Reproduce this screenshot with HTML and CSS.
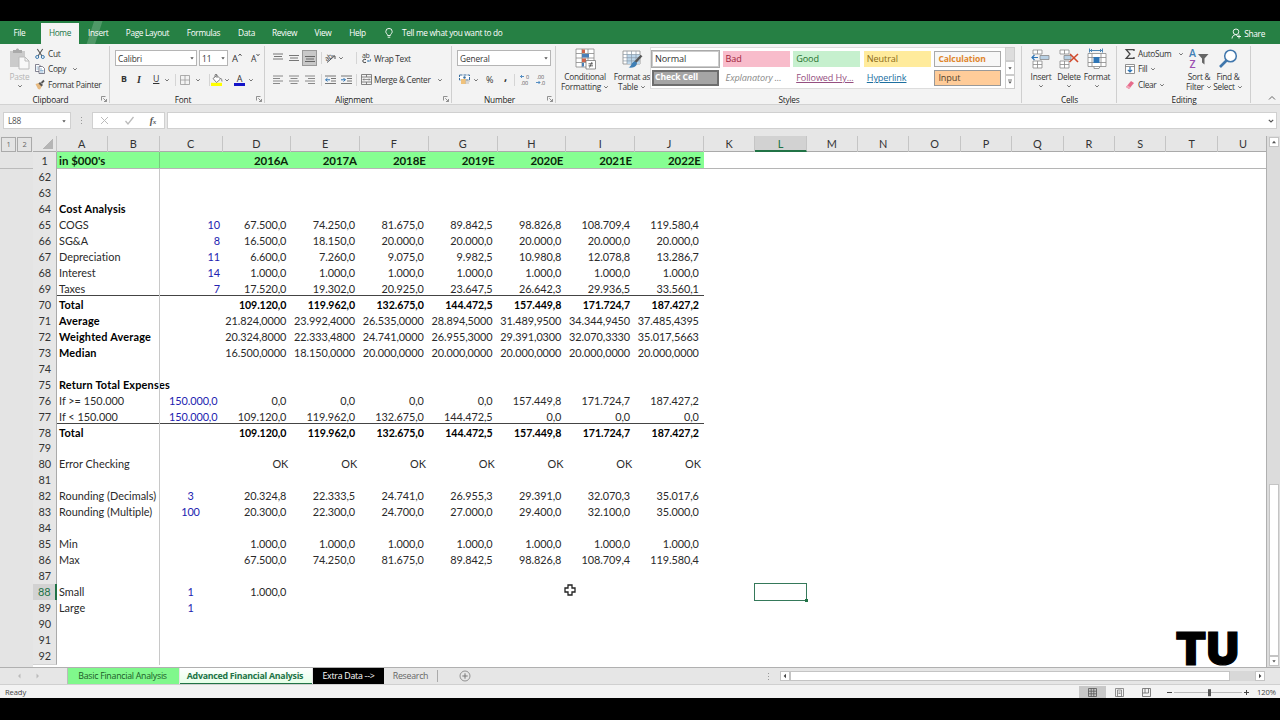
FILE: index.html
```html
<!DOCTYPE html>
<html lang="en">
<head>
<meta charset="utf-8">
<title>Financial Analysis</title>
<link rel="stylesheet" href="styles.css">
</head>
<body>
<svg class="defs" width="0" height="0">
  <symbol id="chev" viewBox="0 0 6 6"><path d="M1.2 2.2 3 4 4.8 2.2" fill="none" stroke="#666" stroke-width=".9"/></symbol>
  <symbol id="drop" viewBox="0 0 6 6"><path d="M1.3 2.2h3.4L3 4.4z" fill="#555"/></symbol>
  <symbol id="launch" viewBox="0 0 6 6"><path d="M.5 4.5v-4h4M2.3 2.3l3 3M5.5 3v2.5H3" fill="none" stroke="#777" stroke-width=".8"/></symbol>
</svg>
<div class="app">
  <nav class="tabs">
    <span>File</span><span class="on">Home</span><span>Insert</span><span>Page Layout</span><span>Formulas</span><span>Data</span><span>Review</span><span>View</span><span>Help</span>
    <svg width="8" height="11" viewBox="0 0 8 11"><path d="M2.6 7.5C2.6 6 .8 5.500 .8 3.600A3.100 3.100 0 0 1 7.200 3.600C7.200 5.500 5.400 6 5.400 7.500zM2.700 9.200h2.600" fill="none" stroke="#fff" stroke-width=".9"/></svg>
    <span class="tell">Tell me what you want to do</span>
    <span class="share"><svg width="11" height="11" viewBox="0 0 11 11"><g fill="none" stroke="#fff" stroke-width=".9"><circle cx="5" cy="3.800" r="2.800"/><path d="M1 10.500C1.200 8 2.800 7 4.500 6.800M5 6.800l1.500 1M8 6.500v4M6 8.500h4"/></g></svg>Share</span>
  </nav>

  <div class="ribbon">
    <section class="group clipboard">
      <div class="body">
        <div class="big dim"><svg width="21" height="22" viewBox="0 0 21 22"><path d="M1 3h15v16H1z" fill="#cbcbcb"/><path d="M4 2h3c0-2 3-2 3 0h3v3H4z" fill="#aaa"/><path d="M10 9h6l4 4v8H10z" fill="#f8f8f8" stroke="#bbb"/><path d="M16 9v4h4" fill="none" stroke="#bbb"/></svg><span class="t">Paste</span><svg class="c"><use href="#chev"/></svg></div>
        <div class="list">
          <div><svg width="10" height="10" viewBox="0 0 10 10"><path d="M2.300 0 7 7M7.700 0 3 7" stroke="#555" stroke-width="1.100"/><g fill="none" stroke="#3b7ab0"><circle cx="2.200" cy="8" r="1.500"/><circle cx="7.800" cy="8" r="1.500"/></g></svg><span>Cut</span></div>
          <div><svg width="10" height="10" viewBox="0 0 10 10"><g fill="#fff" stroke="#667" stroke-width=".8"><path d="M.5.500h3.500l1.500 1.500v5.500h-5z"/><path d="M4 2.500h3.500l2 2v5H4z"/></g><path d="M5 5h2M5 6.500h3.500M5 8h3.500M1.500 3h2M1.500 5h2" stroke="#4a86b8" stroke-width=".6"/></svg><span>Copy</span><svg class="c"><use href="#chev"/></svg></div>
          <div><svg width="10" height="10" viewBox="0 0 10 10"><path d="M.5 4 4 3l3 3-2 3.500-2-.5z" fill="#e6b980"/><path d="M3.500 3.500 5 2l3 3-1.500 1.500z" fill="#555"/><path d="M6.500 3 9 .500" stroke="#555" stroke-width="1.800"/></svg><span>Format Painter</span></div>
        </div>
      </div>
      <footer><b>Clipboard</b><svg><use href="#launch"/></svg></footer>
    </section>

    <section class="group font">
      <div class="body rows">
        <div class="row"><div class="combo">Calibri<svg class="c"><use href="#drop"/></svg></div><div class="combo">11<svg class="c"><use href="#drop"/></svg></div><span class="grow">A<svg width="4" height="4" viewBox="0 0 4 4"><path d="M.5 2.800 2 1l1.500 1.800" fill="none" stroke="#555"/></svg></span><span class="grow small">A<svg width="4" height="4" viewBox="0 0 4 4"><path d="M.5 1 2 2.800 3.500 1" fill="none" stroke="#555"/></svg></span></div>
        <div class="row"><b>B</b><i>I</i><u>U</u><svg class="c"><use href="#chev"/></svg><em></em><svg width="10" height="10" viewBox="0 0 10 10"><path d="M.5.500h9v9h-9zM5 .500v9M.5 5h9" fill="none" stroke="#999" stroke-width=".8"/></svg><svg class="c"><use href="#chev"/></svg><em></em><svg width="12" height="12" viewBox="0 0 12 12"><path d="M0 8.800h11V12H0z" fill="#ff0"/><path d="m2 4.500 4-3 3.500 3.500-4 3.500z" fill="#fff" stroke="#666" stroke-width=".8"/><path d="M4 3V.800q1-1 2 0V4M9.500 4q1.500 1 1.500 3.500" stroke="#666" fill="none" stroke-width=".8"/></svg><svg class="c"><use href="#chev"/></svg><span class="ink">A</span><svg class="c"><use href="#chev"/></svg></div>
      </div>
      <footer><b>Font</b><svg><use href="#launch"/></svg></footer>
    </section>

    <section class="group align">
      <div class="body rows">
        <div class="row"><svg width="10" height="10" viewBox="0 0 10 10"><path d="M0 1h10M1 3.500h8M0 6h10" stroke="#777"/></svg><svg width="10" height="10" viewBox="0 0 10 10"><path d="M0 2.500h10M1 5h8M0 7.500h10" stroke="#777"/></svg><span class="sel"><svg width="10" height="10" viewBox="0 0 10 10"><path d="M0 3.500h10M1 6h8M0 8.500h10" stroke="#666"/></svg></span><em></em><svg width="12" height="10" viewBox="0 0 12 10"><path d="M2 9.500 9.500 3M7 3h3v3" fill="none" stroke="#555"/><text x="0" y="6.500" font-size="7" fill="#444" transform="rotate(-35 4 5)">ab</text></svg><svg class="c"><use href="#chev"/></svg><em></em><svg width="10" height="12" viewBox="0 0 10 12"><text x="0" y="5.500" font-size="7" fill="#444">ab</text><path d="M4 7.600C2.500 6.800.8 7.500.8 9s1.700 2 3.200 1.300" fill="none" stroke="#444"/><path d="M8.500 7v2H5.500M6.500 8l-1 1 1 1" fill="none" stroke="#3b7ab0" stroke-width=".8"/></svg><span>Wrap Text</span></div>
        <div class="row"><svg width="10" height="10" viewBox="0 0 10 10"><path d="M0 1h10M0 3.500h7M0 6h10M0 8.500h7" stroke="#888"/></svg><svg width="10" height="10" viewBox="0 0 10 10"><path d="M0 1h10M1.500 3.500h7M0 6h10M1.500 8.500h7" stroke="#888"/></svg><svg width="10" height="10" viewBox="0 0 10 10"><path d="M0 1h10M3 3.500h7M0 6h10M3 8.500h7" stroke="#888"/></svg><em></em><svg width="11" height="10" viewBox="0 0 11 10"><path d="M0 1h11M6 3.500h5M6 6h5M0 8.500h11" stroke="#777"/><path d="M5 4.800H.5M2.500 3 .700 4.800l1.800 1.700" stroke="#2e75b6" fill="none"/></svg><svg width="11" height="10" viewBox="0 0 11 10"><path d="M0 1h11M6 3.500h5M6 6h5M0 8.500h11" stroke="#777"/><path d="M0 4.800h4.500M2.500 3l1.800 1.800-1.800 1.700" stroke="#2e75b6" fill="none"/></svg><em></em><svg width="11" height="11" viewBox="0 0 11 11"><path d="M.5.500h10v10H.5zM.5 3h10M.5 8h10M5.500.500V3M5.500 8v2.500" fill="none" stroke="#777" stroke-width=".9"/><path d="M2 5.500h7M3 4.500l-1 1 1 1M8 4.500l1 1-1 1" stroke="#555" fill="none" stroke-width=".6"/></svg><span>Merge &amp; Center</span><svg class="c"><use href="#chev"/></svg></div>
      </div>
      <footer><b>Alignment</b><svg><use href="#launch"/></svg></footer>
    </section>

    <section class="group number">
      <div class="body rows">
        <div class="row"><div class="combo">General<svg class="c"><use href="#drop"/></svg></div></div>
        <div class="row"><svg width="12" height="11" viewBox="0 0 12 11"><path d="M.5 1h10v5H.5z" fill="#fff" stroke="#3b6fa0" stroke-dasharray="3 1"/><circle cx="5.500" cy="3.500" r="1.200" fill="#3b6fa0"/><path d="M2 5h5v5H2z" fill="#f0c27b"/><path d="M6 7h5M6 9h4" stroke="#bbb"/></svg><svg class="c"><use href="#chev"/></svg><span class="pct">%</span><span class="comma">,</span><em></em><svg width="11" height="11" viewBox="0 0 11 11"><path d="M4 2.500H.5M2 1 .500 2.500 2 4" fill="none" stroke="#2e75b6" stroke-width=".8"/><g font-size="5.500" fill="#555"><text x="6" y="4.500">0</text><text x="1" y="10.500">.00</text></g></svg><svg width="11" height="11" viewBox="0 0 11 11"><path d="M0 8.500h4M2.500 7 4 8.500 2.500 10" fill="none" stroke="#2e75b6" stroke-width=".8"/><g font-size="5.500" fill="#555"><text x="1" y="4.500">.00</text><text x="5" y="10.500">.0</text></g></svg></div>
      </div>
      <footer><b>Number</b><svg><use href="#launch"/></svg></footer>
    </section>

    <section class="group styles">
      <div class="body">
        <div class="big"><svg width="21" height="21" viewBox="0 0 21 21"><path d="M1 .500h18v18H1zM1 5h18M1 9.500h18M1 14h18M7 .500v18M13 .500v18" fill="#fff" stroke="#888" stroke-width=".8"/><path d="M7 1h3v3.500H7zM7 10h4v3.500H7z" fill="#d0644a"/><path d="M7 5.500h7v3.500H7zM7 14.500h2v3.500H7z" fill="#4a7fb8"/><path d="M11 12h9.500v8.500H11z" fill="#fff" stroke="#777" stroke-width=".8"/><path d="M13.500 15.300h4.500M13.500 17.300h4.500M17 13.500l-2.500 5.500" stroke="#444" stroke-width=".8"/></svg><span class="t">Conditional</span><span class="t">Formatting<svg class="c"><use href="#chev"/></svg></span></div>
        <div class="big"><svg width="21" height="21" viewBox="0 0 21 21"><path d="M1 2.500h17v13H1z" fill="#fff" stroke="#888" stroke-width=".8"/><path d="M5 6h13v9.500H5z" fill="#bcd6ea"/><path d="M1 6h17M1 9.200h17M1 12.400h17M5 2.500v13M9.500 2.500v13M14 2.500v13" stroke="#8a9aa8" stroke-width=".7"/><path d="M19.500 7 13 14" stroke="#555" stroke-width="2.500"/><path d="M12.500 13c2 0 3 1.500 2 3.500s-4 3-8 2.500c3-1 2.500-5 6-6z" fill="#3f7fb5"/></svg><span class="t">Format as</span><span class="t">Table<svg class="c"><use href="#chev"/></svg></span></div>
        <div class="gallery">
          <span class="normal">Normal</span><span class="bad">Bad</span><span class="good">Good</span><span class="neutral">Neutral</span><span class="calc">Calculation</span>
          <span class="check">Check Cell</span><span class="expl">Explanatory ...</span><span class="followed">Followed Hy...</span><span class="link">Hyperlink</span><span class="input">Input</span>
        </div>
        <div class="spin"><i class="off"></i><i><svg class="c"><use href="#drop"/></svg></i><i><svg class="c" viewBox="0 0 6 6"><path d="M1 1h4" stroke="#555" stroke-width=".8"/><path d="M1.300 2.600h3.400L3 4.800z" fill="#555"/></svg></i></div>
      </div>
      <footer><b>Styles</b></footer>
    </section>

    <section class="group cells">
      <div class="body">
        <div class="big"><svg width="20" height="20" viewBox="0 0 20 20"><g fill="#fff" stroke="#888" stroke-width=".8"><path d="M2 1h9v4H2zM6.500 1v4M2 12h9v7H2zM6.500 12v7M2 15.500h9"/><path d="M9 6.500h9v4H9z" fill="#b8d0e4"/></g><path d="M7 8.500H1M3.500 6 1 8.500 3.500 11" fill="none" stroke="#2e75b6" stroke-width="1.200"/></svg><span class="t">Insert</span><svg class="c"><use href="#chev"/></svg></div>
        <div class="big"><svg width="20" height="20" viewBox="0 0 20 20"><g fill="#fff" stroke="#888" stroke-width=".8"><path d="M1 1h9v4H1zM5.500 1v4M1 12h9v7H1zM5.500 12v7M1 15.500h9"/><path d="M5 6.500h7v4H5z" fill="#b8d0e4"/></g><path d="m11 5 8 8M19 5l-8.500 8" stroke="#d0492c" stroke-width="1.600"/></svg><span class="t">Delete</span><svg class="c"><use href="#chev"/></svg></div>
        <div class="big"><svg width="20" height="21" viewBox="0 0 20 21"><path d="M1 5h18v13H1zM5 5v13M14 5v13M1 9h18M1 14h18M7 18v2h5l1-2" fill="#fff" stroke="#888" stroke-width=".8"/><path d="M6.500 8.500h6v6h-6z" fill="#2e75b6"/><path d="M2.500 0v4M15.500 0v4M3 2h12M5 .500 3.500 2 5 3.500M13 .500 14.500 2 13 3.500" fill="none" stroke="#3b7ab0" stroke-width=".9"/></svg><span class="t">Format</span><svg class="c"><use href="#chev"/></svg></div>
      </div>
      <footer><b>Cells</b></footer>
    </section>

    <section class="group editing">
      <div class="body">
        <div class="list">
          <div><svg width="10" height="10" viewBox="0 0 10 10"><path d="M9 2V.700H1.200L5 5 1.200 9.300H9V8" fill="none" stroke="#444" stroke-width="1.300"/></svg><span>AutoSum</span><svg class="c"><use href="#chev"/></svg></div>
          <div><svg width="10" height="10" viewBox="0 0 10 10"><path d="M.5.500h9v9h-9zM.5 2.500h9" fill="#fff" stroke="#777" stroke-width=".8"/><path d="M5 3v5M2.800 5.800 5 8l2.200-2.200" fill="none" stroke="#2e75b6" stroke-width="1.200"/></svg><span>Fill</span><svg class="c"><use href="#chev"/></svg></div>
          <div><svg width="10" height="10" viewBox="0 0 10 10"><path d="M1 7 6 1l3 2-5 6z" fill="#e56b8b"/><path d="m1 7 1.500-1.800 3 2L4 9z" fill="#f2a6b9"/></svg><span>Clear</span><svg class="c"><use href="#chev"/></svg></div>
        </div>
        <div class="big"><svg width="20" height="20" viewBox="0 0 20 20"><g font-size="10.500" font-weight="600"><text x="0" y="8" fill="#3f7fb5">A</text><text x=".5" y="19" fill="#9a4db0">Z</text></g><path d="M9 5h10.500l-4 4.500v6l-2.500-2V9.500z" fill="#666"/></svg><span class="t">Sort &amp;</span><span class="t">Filter<svg class="c"><use href="#chev"/></svg></span></div>
        <div class="big"><svg width="20" height="20" viewBox="0 0 20 20"><circle cx="12.500" cy="7" r="5.800" fill="#fff" stroke="#3f76ac" stroke-width="1.500"/><path d="M8.500 11.500 2 18" stroke="#3f76ac" stroke-width="2.600"/></svg><span class="t">Find &amp;</span><span class="t">Select<svg class="c"><use href="#chev"/></svg></span></div>
      </div>
      <footer><b>Editing</b></footer>
    </section>
    <div class="collapse"><svg width="8" height="6" viewBox="0 0 8 6"><path d="m1 4.500 3-3 3 3" fill="none" stroke="#666"/></svg></div>
  </div>

  <div class="formula">
    <div class="name">L88<svg class="c"><use href="#drop"/></svg></div>
    <svg class="dots" width="3" height="9" viewBox="0 0 3 9"><path d="M1.500 1v8" stroke="#999" stroke-dasharray="1 2"/></svg>
    <div class="fx"><svg width="9" height="9" viewBox="0 0 9 9"><path d="m1 1 7 7M8 1 1 8" stroke="#bbb"/></svg><svg width="9" height="9" viewBox="0 0 9 9"><path d="m.500 5 2.500 3L8.500 1" fill="none" stroke="#bbb" stroke-width="1.300"/></svg><i>f<small>x</small></i></div>
    <div class="entry"><svg width="6" height="6" viewBox="0 0 6 6"><path d="M.8 1.800 3 4 5.200 1.800" fill="none" stroke="#555" stroke-width="1.200"/></svg></div>
  </div>

  <main class="work">
    <div class="outline"><span>1</span><span>2</span></div>
    <div class="sheet">
      <div class="grid" id="grid"></div>
      <svg class="cursor" width="12" height="12" viewBox="0 0 12 12"><path d="M4 1h4v3h3v4H8v3H4V8H1V4h3z" fill="#fff" stroke="#222" stroke-width="1.300"/></svg>
      <div class="logo">TU</div>
    </div>
    <div class="vscroll"><i><svg class="c" viewBox="0 0 6 6"><path d="M1 4.200h4L3 1.800z" fill="#555"/></svg></i><i class="thumb"></i><i><svg class="c"><use href="#drop"/></svg></i></div>
  </main>

  <div class="sheets">
    <svg class="nav" width="24" height="6" viewBox="0 0 24 6"><path d="M3.500.500 1 3l2.500 2.500zM19.500.500 22 3l-2.500 2.500z" fill="#bbb"/></svg>
    <span class="s1">Basic Financial Analysis</span><span class="s2">Advanced Financial Analysis</span><span class="s3">Extra Data --&gt;</span><span class="s4">Research</span>
    <svg class="plus" width="12" height="12" viewBox="0 0 12 12"><circle cx="6" cy="6" r="5" fill="none" stroke="#888" stroke-width=".9"/><path d="M6 3.300v5.400M3.300 6h5.400" stroke="#777"/></svg>
    <svg class="dots" width="3" height="9" viewBox="0 0 3 9"><path d="M1.500 1v8" stroke="#999" stroke-dasharray="1 2"/></svg>
    <div class="hscroll"><i><svg class="c" viewBox="0 0 6 6"><path d="M4 .800v4.400L1.600 3z" fill="#444"/></svg></i><i class="thumb"></i><i><svg class="c" viewBox="0 0 6 6"><path d="M2 .800v4.400L4.400 3z" fill="#444"/></svg></i></div>
  </div>
  <div class="status"><span class="ready">Ready</span>
    <span class="view on"><svg width="9" height="9" viewBox="0 0 9 9"><path d="M.5.500h8v8h-8zM.5 3.200h8M.5 5.800h8M3.200.500v8M5.800.500v8" fill="none" stroke="#555" stroke-width=".8"/></svg></span>
    <span class="view"><svg width="9" height="9" viewBox="0 0 9 9"><path d="M.5.500h8v8h-8zM2.500 2h4v6.500h-4zM3.500 4h2M3.500 5.500h2" fill="none" stroke="#777" stroke-width=".8"/></svg></span>
    <span class="view"><svg width="9" height="9" viewBox="0 0 9 9"><path d="M.5.500h8v8h-8zM3 .500v4.500h3.500V.500M.5 5H3" fill="none" stroke="#666" stroke-width=".8"/></svg></span>
    <svg class="zoom" width="86" height="9" viewBox="0 0 86 9"><path d="M2 4.500h5M79 4.500h5M81.500 2v5" stroke="#444"/><path d="M9 4.500h68" stroke="#bbb"/><path d="M43 1.200h3v7h-3z" fill="#555"/></svg>
    <span>120%</span>
  </div>
</div>
<script src="sheet.js"></script>
</body>
</html>
```
FILE: styles.css
```css
* { box-sizing: border-box; }
body { margin: 0; background: #000; font-family: "Open Sans", "Noto Sans", sans-serif; font-size: 8.3px; letter-spacing: -.32px; line-height: 11px; color: #333; font-variant-ligatures: none; }
.defs { position: absolute; }
svg { display: block; flex: none; overflow: visible; }
svg text { font-family: "Open Sans", sans-serif; }
.c { width: 6px; height: 6px; }
.app { width: 1280px; height: 698px; margin-top: 0; padding-top: 21px; overflow: hidden; display: flex; flex-direction: column; }
.app > * { flex: none; }

.tabs { height: 23px; background: #268044; color: #fff; display: flex; align-items: center; padding: 2px 0 0 4px; white-space: nowrap;
  background-image: linear-gradient(108deg, transparent 89px, #ffffff30 90px, #ffffff30 97px, transparent 98px); }
.tabs > span { padding: 0 9px; height: 21px; line-height: 20px; text-align: center; }
.tabs > span:nth-child(1) { width: 31px; margin-right: 6px; }
.tabs > span.on { background: #f3f3f3; color: #217346; width: 38px; padding: 0; }
.tabs > span:nth-child(3) { width: 38px; }
.tabs > span:nth-child(4) { width: 61px; padding: 0; }
.tabs > span:nth-child(5) { width: 51px; padding: 0; }
.tabs > span:nth-child(6) { width: 34px; }
.tabs > span:nth-child(7) { width: 43px; padding: 0; }
.tabs > span:nth-child(8) { width: 34px; padding: 0; }
.tabs > span:nth-child(9) { width: 35px; padding: 0; margin-right: 10px; }
.tabs > span.share { margin-left: auto; padding: 0 15px 0 0; display: flex; align-items: center; gap: 2px; }

.ribbon { height: 61px; background: #f3f3f3; border-bottom: 1px solid #d2d2d2; display: grid; grid-template-columns: 110px 155px 187px 104px 466px 95px 134px 29px; white-space: nowrap; }
.group { display: flex; flex-direction: column; padding-top: 2px; height: 60px; background: linear-gradient(#cfcfcf, #cfcfcf) no-repeat right 2px / 1px 57px; }
.body { height: 49px; display: flex; }
footer { display: flex; align-items: center; height: 10px; margin-right: 3px; letter-spacing: -.2px; }
footer b { font-weight: 400; flex: 1; text-align: center; color: #222; }
footer svg { width: 6px; height: 6px; }
.styles footer, .cells footer, .editing footer { margin: 0; }
.big { display: flex; flex-direction: column; align-items: center; padding-top: 2px; }
.big > svg:first-child { margin-bottom: 1px; height: 22px; }
.big .t { display: flex; align-items: center; height: 10.500px; letter-spacing: -.25px; }
.big .t .c { margin-left: 2px; }
.big > .c { margin-top: 1px; }
.dim { color: #b5b5b5; }
.clipboard .big { width: 35px; padding-left: 4px; }
.list > div { display: flex; align-items: center; height: 15.5px; line-height: 10px; }
.list span { margin: 0 0 0 3px; }
.list .c { margin-left: 6px; }
.rows { flex-direction: column; }
.row { display: grid; align-items: center; height: 19px; padding-top: 0; }
.row:first-child { height: 24px; }
.row em { width: 1px; height: 12px; background: #d5d5d5; }
.row b, .row i, .row u { font-size: 8.8px; letter-spacing: 0; }
.row b { padding-left: 0; }
.row i { font-family: "Liberation Serif", serif; font-weight: 700; font-size: 10px; }
.combo { height: 16px; background: #fff; border: 1px solid #b5b5b5; display: flex; align-items: center; justify-content: space-between; padding: 0 1px 0 2px; letter-spacing: -.1px; }
.font .row:first-child { grid-template-columns: 82px 29px 17px 16px; padding-left: 5px; column-gap: 2px; }
.font .row:last-child { grid-template-columns: 16px 16px 11px 11px 5px 15px 14px 2px 13px 10px 14px 8px; padding-left: 11px; }
.grow { font-size: 9.500px; padding-left: 2px; display: flex; }
.grow.small { font-size: 8.500px; }
.ink { border-bottom: 3px solid #1414c8; width: 11px; height: 12px; line-height: 10px; text-align: center; font-size: 9px; }
.align .row:first-child { grid-template-columns: 16px 13px 19px 4px 13px 18px 6px 12px auto; padding-left: 8px; }
.align .row:last-child { grid-template-columns: 16px 16px 16px 4px 16px 15px 5px 13px 63px 6px; padding-left: 8px; }
.sel { width: 15px; height: 16px; background: #c8c8c8; border: 1px solid #999; padding: 2px; }
.number .row:first-child { padding: 0 5px; grid-template-columns: 94px; }
.number .row:last-child { grid-template-columns: 14px 13px 18px 10px 6px 16px 11px; padding-left: 7px; }
.pct { font-size: 9px; }
.comma { font-size: 11px; font-weight: 700; line-height: 4px; height: 10px; }
.styles .big:first-child { width: 58px; }
.styles .big:nth-child(2) { width: 36px; }
.gallery { margin-top: 1px; height: 42px; width: 355px; background: #fff; border: 1px solid #ddd; border-right: 0; display: grid; grid-template: 16px 16px / repeat(5, 67px); gap: 3px 3.600px; padding: 3px 0 0 1px; font-size: 9.100px; letter-spacing: -.1px; }
.gallery span { padding-left: 3px; line-height: 15px; height: 16px; overflow: hidden; }
.gallery span.normal { outline: 1px solid #aaa; border: 1px solid #ccc; line-height: 14px; padding-left: 2px; }
.bad { background: #f8bccb; color: #a01c3a; }
.good { background: #c6f0ce; color: #26702e; }
.neutral { background: #ffeb9c; color: #8b6a14; }
.gallery .calc { border: 1px solid #aaa; color: #e0862c; font-weight: 700; background: #f7f7f7; font-size: 8.600px; padding-left: 3px; line-height: 14px; }
.gallery .check { border: 2px solid #6e6e6e; background: #a5a5a5; color: #fff; font-weight: 700; line-height: 11px; padding-left: 1px; font-size: 8.600px; }
.expl { font-style: italic; color: #888; }
.followed { color: #954f80; text-decoration: underline; }
.link { color: #1d6f9f; text-decoration: underline; }
.gallery .input { border: 1px solid #999; background: #ffcc99; color: #54452f; line-height: 14px; }
.spin { margin-top: 1px; width: 10px; display: grid; grid-template-rows: 14px 14px 14px; }
.spin i { border: 1px solid #ccc; background: #fff; display: grid; place-items: center; }
.spin .off { background: #ddd; }
.cells .body { padding-left: 5px; }
.cells .big { width: 28px; }
.editing .list { padding-left: 8px; width: 67px; }
.editing .list > div:first-child .c { margin-left: 7px; }
.editing .list .c { margin-left: 3px; }
.editing .big:nth-child(2) { width: 30px; }
.editing .big:nth-child(3) { width: 28px; }
.collapse { align-self: end; padding: 0 0 3px 17px; }

.formula { height: 31px; background: #e6e6e6; display: flex; align-items: flex-start; padding: 7px 3px 0; color: #555; }
.name { width: 68px; height: 17px; background: #fff; border: 1px solid #d0d0d0; display: flex; align-items: center; justify-content: space-between; padding: 0 3px 0 4px; }
.formula .dots { margin: 4px 9px 0 9px; }
.fx { width: 73px; height: 17px; background: #fff; border: 1px solid #d0d0d0; display: flex; align-items: center; justify-content: space-between; padding: 0 8px 0 7px; margin-right: 2px; }
.fx i { font: italic 700 10px "Liberation Serif", serif; }
.fx small { font-size: 7px; }
.entry { flex: 1; height: 17px; background: #fff; border: 1px solid #d0d0d0; display: flex; align-items: center; justify-content: flex-end; padding-right: 2px; }

.work { height: 531px; display: grid; grid-template-columns: 33px 1234px 13px; background: #e4e4e4; }
.outline { display: flex; gap: 1px; padding: 1px 0 0 1px; height: 32.500px; border-bottom: 1px solid #bbb; }
.outline span { width: 15px; height: 15px; border: 1px solid #aaa; text-align: center; line-height: 13px; color: #666; font-size: 7.500px; }
.sheet { position: relative; overflow: hidden; height: 531px; background: #fff; border-right: 1px solid #b0b0b0; font-family: Lato, sans-serif; font-size: 10.900px; letter-spacing: 0; }
.line { display: grid; grid-template-columns: 23.500px 51.500px 51.500px 63px repeat(7, 68.780px) repeat(11, 51.400px); height: 15.970px; line-height: 16px; }
.line > span { white-space: nowrap; text-align: right; padding-right: 5px; min-width: 0; color: #2a2a2a; letter-spacing: -.08px; }
.line > span:first-child { background: #e6e6e6; border-right: 1px solid #aaa; border-bottom: 1px solid #d2d2d2; text-align: center; padding: 0 0 0 1px; color: #333; letter-spacing: 0; }
.line > span:nth-child(2) { text-align: left; padding: 0 0 0 2.500px; letter-spacing: 0; }
.line > span:nth-child(3) { border-right: 1px solid #c8c8c8; }
.line > span.k { padding-right: 2.500px; color: #2222b0; }
.line > span.q { color: #2222b0; }
.line > span.m { text-align: center; padding: 0 1px 0 0; color: #2222b0; }
.line > span.ok { padding-right: 3px; }
.strong > span:not(:first-child), .title > span:nth-child(2) { font-weight: 700; color: #000; font-size: 10.600px; line-height: 17px; }
.line.strong > span:nth-child(2), .line.title > span:nth-child(2) { font-size: 10.900px; letter-spacing: .19px; line-height: 16.500px; }
.rule > span:nth-child(n+2):nth-child(-n+11) { background: linear-gradient(#444, #444) no-repeat 0 14.500px / 100% 1px; }
.head { height: 16px; background: #e6e6e6; border-bottom: 1px solid #aaa; }
.line.head > span, .line.head > span:nth-child(2) { text-align: center; padding: 0; border-right: 1px solid #c5c5c5; color: #333; }
.line.head > span:first-child { background: linear-gradient(135deg, transparent 50%, #b5b5b5 50%) no-repeat 10px 3px / 10px 10px; border-bottom: 0; }
.line.head > .cur { background: #d2d2d2; border-bottom: 2px solid #217346; height: 16px; color: #217346; }
.freeze { height: 17px; border-bottom: 1px solid #b5b5b5; line-height: 17px; }
.line.freeze > span:not(:first-child) { font-weight: 700; font-size: 11.500px; color: #0b260b; padding-right: 3px; }
.freeze > span:nth-child(n+2):nth-child(-n+11) { background: #86ff92; height: 16px; }
.line.freeze > span:nth-child(3) { border-right-color: #74cc7c; }
.line.active > span:first-child { background: #d2d2d2; border-right: 2px solid #217346; color: #217346; }
.pick { position: relative; }
.pick::before { content: ""; position: absolute; inset: -1px 0 0 -1px; border: 1.500px solid #35795a; }
.pick::after { content: ""; position: absolute; right: -1px; bottom: -1px; width: 3px; height: 3px; background: #217346; }
.cursor { position: absolute; left: 530.500px; top: 448px; }
.logo { position: absolute; left: 1142.500px; top: 486px; font: 900 45px/54px Inter, sans-serif; color: #000; letter-spacing: 0; -webkit-text-stroke: 1.200px #000; height: 45px; }
.vscroll { display: flex; flex-direction: column; padding: 1px 1px 1px 2px; background: #dcdcdc; }
.vscroll i { height: 10px; background: #fff; border: 1px solid #c4c4c4; display: grid; place-items: center; }
.vscroll .thumb { height: 172px; margin-top: auto; }

.sheets { height: 18px; background: #e6e6e6; border-top: 1px solid #b0b0b0; border-bottom: 1px solid #d0d0d0; display: flex; align-items: center; padding-left: 17px; color: #666; white-space: nowrap; }
.sheets > span { height: 16px; line-height: 17px; text-align: center; font-size: 8.800px; letter-spacing: -.26px; }
.nav { margin-right: 26px; }
.s1 { width: 112px; background: #80f88c; color: #1c5a28; margin-right: 1px; border-left: 1px solid #bbb; padding-right: 2px; }
.s2 { width: 132px; background: linear-gradient(#fff, #e6ffe8); color: #217346; font-weight: 700; border-bottom: 1px solid #217346; margin-right: 1px; padding-right: 2px; }
.s3 { width: 71px; background: #000; color: #fff; }
.s4 { width: 54px; border-right: 1px solid #aaa; }
.sheets > .s4 { height: 12px; line-height: 13px; }
.plus { margin: 0 296px 0 21px; }
.hscroll { width: 485px; height: 10px; margin-left: 10px; background: #d8d8d8; display: flex; }
.hscroll i { width: 10px; background: #fff; border: 1px solid #c4c4c4; display: grid; place-items: center; }
.hscroll .thumb { width: 440px; margin-right: auto; }
.status { height: 13px; background: #f3f3f3; display: flex; align-items: center; padding: 2px 4px 0 5px; font-size: 7.600px; letter-spacing: -.1px; color: #444; }
.ready { margin-right: auto; }
.view { width: 27px; height: 13px; display: grid; place-items: center; }
.view.on { background: #c8c8c8; }
.zoom { margin: 0 6px 0 5px; }
```
FILE: sheet.js
```js
// Rows of the sheet: number, label, column C (with its class), values for D onward, row class.
const same = (v) => Array(7).fill(v);
const rows = [
  [62], [63],
  [64, "Cost Analysis", "", "", [], "title"],
  [65, "COGS", "k", "10", ["67.500,0", "74.250,0", "81.675,0", "89.842,5", "98.826,8", "108.709,4", "119.580,4"]],
  [66, "SG&A", "k", "8", ["16.500,0", "18.150,0", "20.000,0", "20.000,0", "20.000,0", "20.000,0", "20.000,0"]],
  [67, "Depreciation", "k", "11", ["6.600,0", "7.260,0", "9.075,0", "9.982,5", "10.980,8", "12.078,8", "13.286,7"]],
  [68, "Interest", "k", "14", same("1.000,0")],
  [69, "Taxes", "k", "7", ["17.520,0", "19.302,0", "20.925,0", "23.647,5", "26.642,3", "29.936,5", "33.560,1"], "rule"],
  [70, "Total", "", "", ["109.120,0", "119.962,0", "132.675,0", "144.472,5", "157.449,8", "171.724,7", "187.427,2"], "strong"],
  [71, "Average", "", "", ["21.824,0000", "23.992,4000", "26.535,0000", "28.894,5000", "31.489,9500", "34.344,9450", "37.485,4395"], "title"],
  [72, "Weighted Average", "", "", ["20.324,8000", "22.333,4800", "24.741,0000", "26.955,3000", "29.391,0300", "32.070,3330", "35.017,5663"], "title"],
  [73, "Median", "", "", ["16.500,0000", "18.150,0000", "20.000,0000", "20.000,0000", "20.000,0000", "20.000,0000", "20.000,0000"], "title"],
  [74],
  [75, "Return Total Expenses", "", "", [], "title"],
  [76, "If >= 150.000", "q", "150.000,0", ["0,0", "0,0", "0,0", "0,0", "157.449,8", "171.724,7", "187.427,2"]],
  [77, "If < 150.000", "q", "150.000,0", ["109.120,0", "119.962,0", "132.675,0", "144.472,5", "0,0", "0,0", "0,0"], "rule"],
  [78, "Total", "", "", ["109.120,0", "119.962,0", "132.675,0", "144.472,5", "157.449,8", "171.724,7", "187.427,2"], "strong"],
  [79],
  [80, "Error Checking", "", "", same("OK")],
  [81],
  [82, "Rounding (Decimals)", "m", "3", ["20.324,8", "22.333,5", "24.741,0", "26.955,3", "29.391,0", "32.070,3", "35.017,6"]],
  [83, "Rounding (Multiple)", "m", "100", ["20.300,0", "22.300,0", "24.700,0", "27.000,0", "29.400,0", "32.100,0", "35.000,0"]],
  [84],
  [85, "Min", "", "", same("1.000,0")],
  [86, "Max", "", "", ["67.500,0", "74.250,0", "81.675,0", "89.842,5", "98.826,8", "108.709,4", "119.580,4"]],
  [87],
  [88, "Small", "m", "1", ["1.000,0"], "active"],
  [89, "Large", "m", "1", []],
  [90], [91], [92]
];

const grid = document.getElementById("grid");

function addLine(cls, cells) {
  const line = document.createElement("div");
  line.className = ("line " + cls).trim();
  for (let i = 0; i < 22; i++) {
    const [text, c] = cells[i] || ["", ""];
    const s = document.createElement("span");
    s.textContent = text;
    if (c) s.className = c;
    line.append(s);
  }
  grid.append(line);
}

addLine("head", [["", ""], ..."ABCDEFGHIJKLMNOPQRSTU".split("").map((l) => [l, l === "L" ? "cur" : ""])]);
addLine("freeze", [["1", ""], ["in $000's", ""], ["", ""], ["", ""],
  ...["2016A", "2017A", "2018E", "2019E", "2020E", "2021E", "2022E"].map((y) => [y, ""])]);
for (const [n, label = "", cc = "", c = "", vals = [], cls = ""] of rows) {
  const cells = [[n, ""], [label, ""], ["", ""], [c, cc], ...vals.map((v) => [v, v === "OK" ? "ok" : ""])];
  if (n === 88) cells[12] = ["", "pick"];
  addLine(cls, cells);
}
```
